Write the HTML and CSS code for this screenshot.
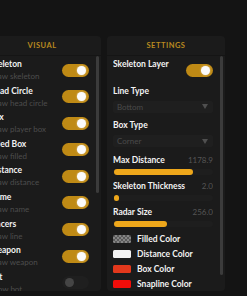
FILE: index.html
```html
<!DOCTYPE html>
<html lang="en">
<head>
    <meta charset="UTF-8">
    <meta name="viewport" content="width=device-width, initial-scale=1.0">
    <title>ESP Menu</title>
    <link rel="stylesheet" href="styles.css">
</head>
<body>

    <div class="app">

        <!-- Visual toggles -->
        <section class="panel">
            <div class="panel-head">VISUAL</div>
            <div class="panel-body">
                <div class="panel-list">
                    <div class="row">
                        <div class="row-text">
                            <div class="label">Skeleton</div>
                            <div class="desc">Draw skeleton</div>
                        </div>
                        <div class="toggle on"><span class="knob"></span></div>
                    </div>
                    <div class="row">
                        <div class="row-text">
                            <div class="label">Head Circle</div>
                            <div class="desc">Draw head circle</div>
                        </div>
                        <div class="toggle on"><span class="knob"></span></div>
                    </div>
                    <div class="row">
                        <div class="row-text">
                            <div class="label">Box</div>
                            <div class="desc">Draw player box</div>
                        </div>
                        <div class="toggle on"><span class="knob"></span></div>
                    </div>
                    <div class="row">
                        <div class="row-text">
                            <div class="label">Filled Box</div>
                            <div class="desc">Draw filled</div>
                        </div>
                        <div class="toggle on"><span class="knob"></span></div>
                    </div>
                    <div class="row">
                        <div class="row-text">
                            <div class="label">Distance</div>
                            <div class="desc">Draw distance</div>
                        </div>
                        <div class="toggle on"><span class="knob"></span></div>
                    </div>
                    <div class="row">
                        <div class="row-text">
                            <div class="label">Name</div>
                            <div class="desc">Draw name</div>
                        </div>
                        <div class="toggle on"><span class="knob"></span></div>
                    </div>
                    <div class="row">
                        <div class="row-text">
                            <div class="label">Tracers</div>
                            <div class="desc">Draw line</div>
                        </div>
                        <div class="toggle on"><span class="knob"></span></div>
                    </div>
                    <div class="row">
                        <div class="row-text">
                            <div class="label">Weapon</div>
                            <div class="desc">Draw weapon</div>
                        </div>
                        <div class="toggle on"><span class="knob"></span></div>
                    </div>
                    <div class="row">
                        <div class="row-text">
                            <div class="label">Bot</div>
                            <div class="desc">Show bot</div>
                        </div>
                        <div class="toggle"><span class="knob"></span></div>
                    </div>
                </div>
                <div class="scroll"><div class="thumb thumb-short"></div></div>
            </div>
        </section>

        <!-- Settings -->
        <section class="panel">
            <div class="panel-head">SETTINGS</div>
            <div class="panel-body">
                <div class="panel-list">
                    <div class="row">
                        <div class="row-text">
                            <div class="label">Skeleton Layer</div>
                        </div>
                        <div class="toggle on"><span class="knob"></span></div>
                    </div>

                    <div class="field">
                        <div class="label">Line Type</div>
                        <div class="select">
                            <span>Bottom</span>
                            <svg width="6" height="5" viewBox="0 0 6 5"><path d="M0 0H6L3 5Z" fill="#4f4f4f"/></svg>
                        </div>
                    </div>

                    <div class="field">
                        <div class="label">Box Type</div>
                        <div class="select">
                            <span>Corner</span>
                            <svg width="6" height="5" viewBox="0 0 6 5"><path d="M0 0H6L3 5Z" fill="#4f4f4f"/></svg>
                        </div>
                    </div>

                    <div class="slider">
                        <div class="slider-head">
                            <span class="label">Max Distance</span>
                            <span class="value">1178.9</span>
                        </div>
                        <div class="track"><div class="fill" style="width: 80%"></div></div>
                    </div>

                    <div class="slider">
                        <div class="slider-head">
                            <span class="label">Skeleton Thickness</span>
                            <span class="value">2.0</span>
                        </div>
                        <div class="track"><div class="fill" style="width: 5%"></div></div>
                    </div>

                    <div class="slider">
                        <div class="slider-head">
                            <span class="label">Radar Size</span>
                            <span class="value">256.0</span>
                        </div>
                        <div class="track"><div class="fill" style="width: 54%"></div></div>
                    </div>

                    <div class="colors">
                        <div class="color-row"><span class="swatch checker"></span><span class="label">Filled Color</span></div>
                        <div class="color-row"><span class="swatch white"></span><span class="label">Distance Color</span></div>
                        <div class="color-row"><span class="swatch orange"></span><span class="label">Box Color</span></div>
                        <div class="color-row"><span class="swatch red"></span><span class="label">Snapline Color</span></div>
                    </div>
                </div>
                <div class="scroll"><div class="thumb thumb-long"></div></div>
            </div>
        </section>

    </div>

</body>
</html>
```

FILE: styles.css
```css
body {
    font-family: Lato, "Open Sans", sans-serif;
    background-color: #141414;
    color: #f2f2f2;
    margin: 0;
    overflow: hidden;
}

.app {
    display: flex;
    gap: 6px;
    padding-top: 36px;
    margin-left: -17px;
}

.panel {
    width: 118px;
    height: 255px;
    flex-shrink: 0;
    background: #1b1b1b;
    border-radius: 4px;
    display: flex;
    flex-direction: column;
    overflow: hidden;
}

.panel-head {
    height: 19px;
    border-bottom: 1px solid #151515;
    display: flex;
    align-items: center;
    justify-content: center;
    color: #b9891f;
    font-size: 7.5px;
    font-weight: bold;
    letter-spacing: 0.5px;
}

.panel-body {
    flex: 1;
    display: flex;
    min-height: 0;
    padding: 2px 2px 0 6px;
}

.panel-list {
    flex: 1;
    min-width: 0;
    overflow: hidden;
}

.scroll {
    width: 3px;
    margin-left: 7px;
}

.thumb {
    width: 3px;
    margin-top: -2px;
    background: #3b3b3b;
    border-radius: 2px;
}

.thumb-short { height: 137px; }
.thumb-long { height: 219px; }

/* Toggle rows */
.row {
    display: flex;
    align-items: center;
    justify-content: space-between;
    height: 24px;
    margin-bottom: 2.6px;
}

.row-text {
    height: 24px;
}

.label {
    font-size: 8.5px;
    font-weight: bold;
    line-height: 12px;
    white-space: nowrap;
}

.desc {
    font-size: 8px;
    line-height: 12px;
    color: #4d4d4d;
    white-space: nowrap;
}

.toggle {
    width: 27px;
    height: 13px;
    box-sizing: border-box;
    padding: 2px 3px;
    border-radius: 7px;
    background: #1f1f1f;
    display: flex;
    align-items: center;
    flex-shrink: 0;
}

.knob {
    width: 9px;
    height: 9px;
    border-radius: 50%;
    background: #454545;
}

.toggle.on {
    background: #bf8a15;
}

.toggle.on .knob {
    margin-left: auto;
    background: #fbfbfb;
    box-shadow: 0 0 2px rgba(255, 255, 255, 0.6);
}

/* Dropdowns */
.field {
    margin-bottom: 6.5px;
}

.select {
    height: 12px;
    margin-top: 4px;
    padding: 0 5px 0 4px;
    background: #1f1f1f;
    border-radius: 2px;
    display: flex;
    align-items: center;
    justify-content: space-between;
    color: #4a4a4a;
    font-size: 8px;
}

/* Sliders */
.slider {
    margin-bottom: 5px;
}

.slider-head {
    display: flex;
    justify-content: space-between;
    align-items: center;
}

.value {
    font-size: 8px;
    color: #555;
    line-height: 12px;
}

.track {
    height: 6px;
    margin-top: 3px;
    padding-left: 1px;
    border-radius: 3px;
    background: #1e1e1e;
}

.fill {
    height: 100%;
    border-radius: 3px;
    background: #eea71b;
}

/* Colour pickers */
.colors {
    padding-top: 1.5px;
}

.color-row {
    display: flex;
    align-items: center;
    gap: 6px;
    height: 11px;
    margin-bottom: 4px;
}

.swatch {
    width: 18px;
    height: 8px;
    border-radius: 1.5px;
    flex-shrink: 0;
}

.checker {
    background: repeating-conic-gradient(#858585 0 25%, #5a5a5a 0 50%) 0 0 / 4px 4px;
}

.white { background: #f2f2f2; }
.orange { background: #e2381c; }
.red { background: #f10d0a; }
```
